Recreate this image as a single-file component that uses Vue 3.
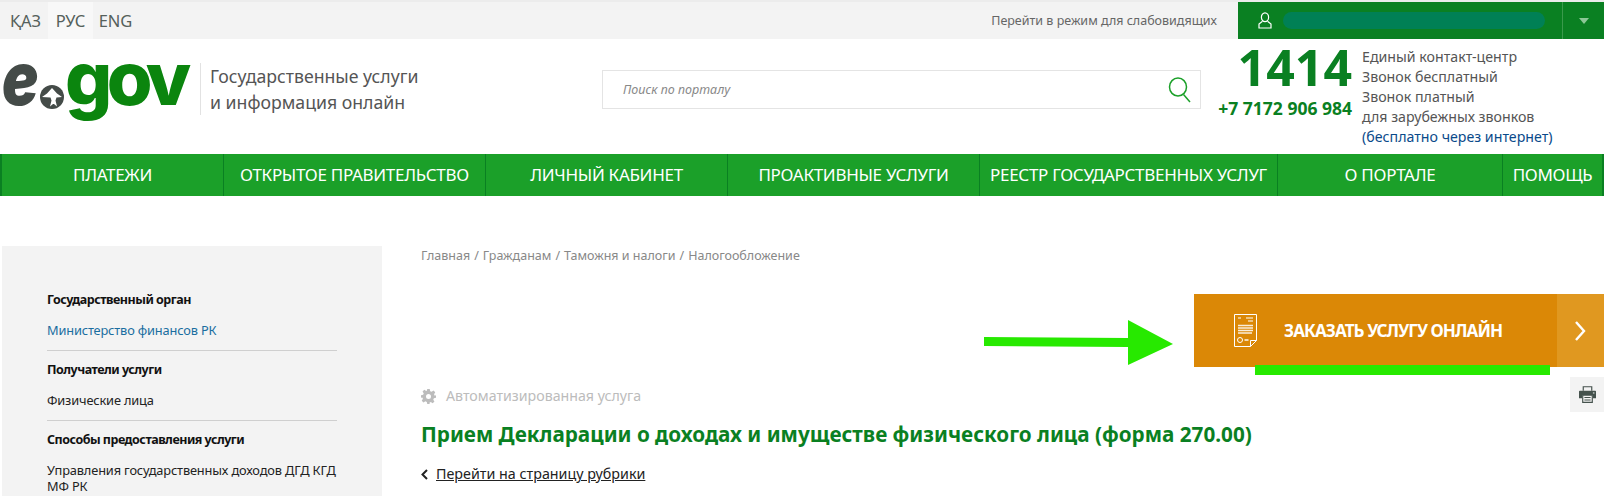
<template>
  <div class="page">
    <div class="topbar">
      <div class="langs">
        <a class="lang">ҚАЗ</a>
        <a class="lang active">РУС</a>
        <a class="lang">ENG</a>
      </div>
      <a class="lowvision">Перейти в режим для слабовидящих</a>
      <div class="userbox">
        <svg class="usericon" width="14" height="17" viewBox="0 0 14 17" fill="none" stroke="#fff" stroke-width="1.2">
          <ellipse cx="7" cy="5.2" rx="3.6" ry="4.4" />
          <path d="M4.500 9.200 1 12v4h12v-4L9.500 9.200" />
        </svg>
        <div class="username"></div>
        <div class="usercaret"><i></i></div>
      </div>
    </div>

    <header class="header">
      <div class="logo">
        <span class="logo-e">e</span>
        <svg class="logo-mark" width="24" height="24" viewBox="0 0 24 24">
          <circle cx="12" cy="12" r="12" fill="#444b48" />
          <path d="M12 3l5 5.500 5 3.500-5.500.5-1 3 1.500 6-3-2.500-1 0-3 2.500 1.500-6-1-3L2 12l5-3.500z" fill="#fff" />
        </svg>
        <span class="logo-gov">gov</span>
      </div>
      <div class="tagline">Государственные услуги<br />и информация онлайн</div>
      <div class="search">
        <span>Поиск по порталу</span>
        <svg width="24" height="26" viewBox="0 0 24 26" fill="none" stroke="#1ba029" stroke-width="1.5">
          <ellipse cx="10" cy="10" rx="8.500" ry="9" />
          <path d="M15.500 17.500 22 25" />
        </svg>
      </div>
      <div class="phones">
        <div class="short">1414</div>
        <div class="long">+7 7172 906 984</div>
      </div>
      <div class="contact">
        <div>Единый контакт-центр</div>
        <div>Звонок бесплатный</div>
        <div>Звонок платный</div>
        <div>для зарубежных звонков</div>
        <div class="free">(бесплатно через интернет)</div>
      </div>
    </header>

    <nav class="nav">
      <a v-for="item in menu" :key="item.title" class="navitem" :style="{ width: item.width + 'px' }">{{ item.title }}</a>
    </nav>

    <div class="content">
      <aside class="side">
        <template v-for="(block, i) in sideBlocks" :key="block.title">
          <hr v-if="i > 0" />
          <h4>{{ block.title }}</h4>
          <p :class="{ link: block.link }">{{ block.text }}</p>
        </template>
      </aside>

      <main class="main">
        <div class="crumbs">
          <template v-for="(c, i) in crumbs" :key="c">
            <i v-if="i > 0">/</i>
            <span>{{ c }}</span>
          </template>
        </div>

        <div class="orderrow">
          <div class="arrow">
            <svg width="189" height="46" viewBox="0 0 189 46">
              <path d="M0 17 144 18V0L189 24 144 45V27L0 26z" fill="#27e900" />
            </svg>
          </div>
          <a class="order">
            <svg class="doc" width="23" height="33" viewBox="0 0 23 33" fill="none" stroke="#fff" stroke-width="1">
              <path d="M.5.500h22v26l-6 6H.5z" />
              <path d="M16.500 32.500v-6h6" />
              <path d="M4 4h3M12 4h7M14 7h5" stroke-width="1.200" />
              <path d="M4 11.500h15M4 14h15M4 16.500h15M4 19h14" stroke-width="1.400" opacity=".85" />
              <circle cx="6" cy="26" r="2.500" />
              <path d="M10.500 26h4" stroke-width="1.400" />
            </svg>
            <span class="ordertext">ЗАКАЗАТЬ УСЛУГУ ОНЛАЙН</span>
            <span class="orderarrow">
              <svg width="11" height="20" viewBox="0 0 11 20" fill="none" stroke="#fff" stroke-width="2.400">
                <path d="M1 1l8 9-8 9" />
              </svg>
            </span>
          </a>
          <div class="underline"></div>
        </div>

        <div class="printrow">
          <a class="print">
            <svg width="17" height="17" viewBox="0 0 22 22">
              <path d="M5.500 6V1h11v5" fill="none" stroke="#45524d" stroke-width="1.500" />
              <path d="M1 6h20a1 1 0 011 1v9h-4v-4H4v4H0V7a1 1 0 011-1z" fill="#45524d" />
              <path d="M4.800 11.800h12.400v9.400H4.800z" fill="#f3f3f3" stroke="#45524d" stroke-width="1.500" />
              <path d="M7 15h8M7 18h8" stroke="#45524d" stroke-width="1.300" />
              <path d="M18 8h2v2h-2z" fill="#b8c0bc" />
            </svg>
          </a>
        </div>

        <div class="auto">
          <svg width="15" height="15" viewBox="0 0 24 24">
            <path fill="#bcbcbc" fill-rule="evenodd" d="M10 0h4l.7 3.400 2.300 1 3-1.900 2.800 2.800-1.900 3 1 2.300L24 10v4l-3.400.7-1 2.300 1.900 3-2.800 2.800-3-1.900-2.300 1L14 24h-4l-.7-3.400-2.300-1-3 1.900-2.800-2.800 1.900-3-1-2.300L0 14v-4l3.400-.7 1-2.300-1.900-3L5.300 1.200l3 1.900 1-.4zM12 8a4 4 0 100 8 4 4 0 000-8z" />
          </svg>
          <span>Автоматизированная услуга</span>
        </div>
        <h1>Прием Декларации о доходах и имуществе физического лица (форма 270.00)</h1>
        <div class="back">
          <svg width="7" height="11" viewBox="0 0 7 11" fill="none" stroke="#222" stroke-width="2"><path d="M6 1 1.500 5.500 6 10" /></svg>
          <a>Перейти на страницу рубрики</a>
        </div>
      </main>
    </div>
  </div>
</template>

<script setup>
const menu = [
  { title: 'ПЛАТЕЖИ', width: 222 },
  { title: 'ОТКРЫТОЕ ПРАВИТЕЛЬСТВО', width: 262 },
  { title: 'ЛИЧНЫЙ КАБИНЕТ', width: 242 },
  { title: 'ПРОАКТИВНЫЕ УСЛУГИ', width: 252 },
  { title: 'РЕЕСТР ГОСУДАРСТВЕННЫХ УСЛУГ', width: 298 },
  { title: 'О ПОРТАЛЕ', width: 225 },
  { title: 'ПОМОЩЬ', width: 99 },
]

const sideBlocks = [
  { title: 'Государственный орган', text: 'Министерство финансов РК', link: true },
  { title: 'Получатели услуги', text: 'Физические лица' },
  { title: 'Способы предоставления услуги', text: 'Управления государственных доходов ДГД КГД МФ РК' },
]

const crumbs = ['Главная', 'Гражданам', 'Таможня и налоги', 'Налогообложение']
</script>

<style>
html,
body {
  margin: 0;
  background: #fff;
  overflow: hidden;
}
</style>

<style scoped>
.page {
  width: 1604px;
  height: 496px;
  overflow: hidden;
  font-family: "Noto Sans", "Liberation Sans", sans-serif;
  color: #222;
}

.topbar {
  margin-top: 2px;
  height: 37px;
  background: #f3f3f3;
  display: flex;
  align-items: center;
  box-shadow: 0 -2px 0 #ececec;
}

.langs {
  display: flex;
  margin-left: 3px;
  height: 37px;
  flex: 1;
}

.lang {
  width: 45px;
  line-height: 37px;
  text-align: center;
  font-size: 16.500px;
  color: #55605b;
}

.lang.active {
  background: #f8f8f8;
}

.lowvision {
  font-size: 12.500px;
  color: #666;
  margin-right: 21px;
}

.userbox {
  width: 366px;
  height: 37px;
  background: #0a8022;
  display: flex;
  align-items: center;
}

.usericon {
  margin-left: 20px;
}

.username {
  width: 262px;
  height: 17px;
  margin-left: 11px;
  border-radius: 9px;
  background: #008055;
}

.usercaret {
  margin-left: 17px;
  flex: 1;
  height: 37px;
  border-left: 1px solid #3a9a4c;
  display: flex;
  align-items: center;
  justify-content: center;
}

.usercaret i {
  border: 5px solid transparent;
  border-top: 6px solid #8cc796;
  border-bottom: 0;
}

.header {
  height: 115px;
  display: flex;
  align-items: flex-start;
}

.logo {
  width: 200px;
  height: 64px;
  padding-left: 2px;
  margin-top: 7px;
  box-sizing: border-box;
  display: flex;
  align-items: flex-start;
  font-family: Inter, "Liberation Sans", sans-serif;
  font-weight: 800;
  line-height: 64px;
  flex: none;
}

.logo-e {
  width: 38px;
  font-size: 74px;
  font-weight: 900;
  font-style: italic;
  color: #444b48;
  transform: scaleX(0.82);
  transform-origin: left center;
}

.logo-mark {
  margin-top: 39px;
  flex: none;
}

.logo-gov {
  margin-left: 1px;
  font-size: 74px;
  color: #0b850e;
  letter-spacing: -5.500px;
}

.tagline {
  margin-top: 24px;
  height: 52px;
  padding-left: 9px;
  border-left: 1px solid #e2e2e2;
  width: 392px;
  flex: none;
  font-size: 17.700px;
  line-height: 26px;
  color: #555;
}

.search {
  margin-top: 31px;
  width: 599px;
  height: 39px;
  box-sizing: border-box;
  border: 1px solid #e4e4e4;
  padding: 0 8px 0 20px;
  display: flex;
  align-items: center;
  justify-content: space-between;
  font-size: 12.500px;
  font-style: italic;
  color: #888;
  flex: none;
}

.phones {
  width: 151px;
  flex: none;
  text-align: right;
  color: #0a8022;
  font-weight: 700;
}

.short {
  font-size: 50px;
  line-height: 56px;
}

.long {
  font-size: 17.500px;
  line-height: 20px;
  margin-top: 3px;
}

.contact {
  margin: 8px 0 0 10px;
  font-size: 14.200px;
  line-height: 20px;
  color: #555;
  white-space: nowrap;
}

.free {
  color: #0a4a8a;
}

.nav {
  height: 42px;
  background: #1ba029;
  display: flex;
  border-left: 2px solid #0a8022;
  border-right: 2px solid #0a8022;
}

.navitem {
  box-sizing: border-box;
  flex: none;
  line-height: 42px;
  text-align: center;
  font-size: 17px;
  color: #fff;
  letter-spacing: -0.300px;
  white-space: nowrap;
  border-right: 1px solid #0a8022;
}

.navitem:last-child {
  border-right: 0;
}

.content {
  display: flex;
  padding: 50px 0 0 2px;
}

.side {
  width: 380px;
  height: 250px;
  flex: none;
  box-sizing: border-box;
  background: #f3f3f3;
  padding: 46px 45px 0 45px;
  font-size: 12.800px;
  letter-spacing: -0.150px;
}

.side h4 {
  margin: 0;
  font-size: 12.500px;
  line-height: 16px;
  font-weight: 700;
  letter-spacing: -0.500px;
  color: #111;
}

.side p {
  margin: 14px 0 0;
  line-height: 16px;
  color: #222;
}

.side p.link {
  color: #1a6ea0;
}

.side hr {
  border: 0;
  border-top: 1px solid #cfcfcf;
  margin: 12px 0 11px;
}

.main {
  flex: 1;
  min-width: 0;
  padding-left: 39px;
}

.crumbs {
  padding-top: 2px;
  font-size: 12.500px;
  line-height: 16px;
  color: #888;
  white-space: nowrap;
  display: flex;
  gap: 4px;
}

.crumbs i {
  font-style: normal;
}

.orderrow {
  position: relative;
  margin-top: 30px;
  height: 73px;
  display: flex;
  justify-content: flex-end;
}

.arrow {
  position: absolute;
  left: 563px;
  top: 26px;
  line-height: 0;
}

.order {
  width: 410px;
  height: 73px;
  background: #db8806;
  display: flex;
  align-items: center;
  color: #fff;
  font-weight: 700;
}

.doc {
  margin-left: 40px;
}

.ordertext {
  margin-left: 27px;
  flex: 1;
  font-size: 17px;
  letter-spacing: -0.900px;
}

.orderarrow {
  width: 47px;
  height: 73px;
  background: #e09820;
  display: flex;
  align-items: center;
  justify-content: center;
}

.underline {
  position: absolute;
  right: 54px;
  bottom: -8px;
  width: 295px;
  height: 10px;
  background: #27e900;
}

.printrow {
  display: flex;
  justify-content: flex-end;
  margin-top: 10px;
  height: 35px;
}

.print {
  width: 34px;
  height: 35px;
  background: #f3f3f3;
  display: flex;
  align-items: center;
  justify-content: center;
}

.auto {
  margin-top: -26px;
  display: flex;
  align-items: center;
  gap: 10px;
  font-size: 14.200px;
  line-height: 20px;
  color: #bcbcbc;
}

h1 {
  margin: 13px 0 0;
  font-size: 20.700px;
  line-height: 30px;
  color: #0a8022;
  font-weight: 700;
  white-space: nowrap;
}

.back {
  margin-top: 15px;
  display: flex;
  align-items: center;
  gap: 8px;
  font-size: 14.300px;
  line-height: 20px;
}

.back a {
  text-decoration: underline;
  color: #222;
}
</style>
